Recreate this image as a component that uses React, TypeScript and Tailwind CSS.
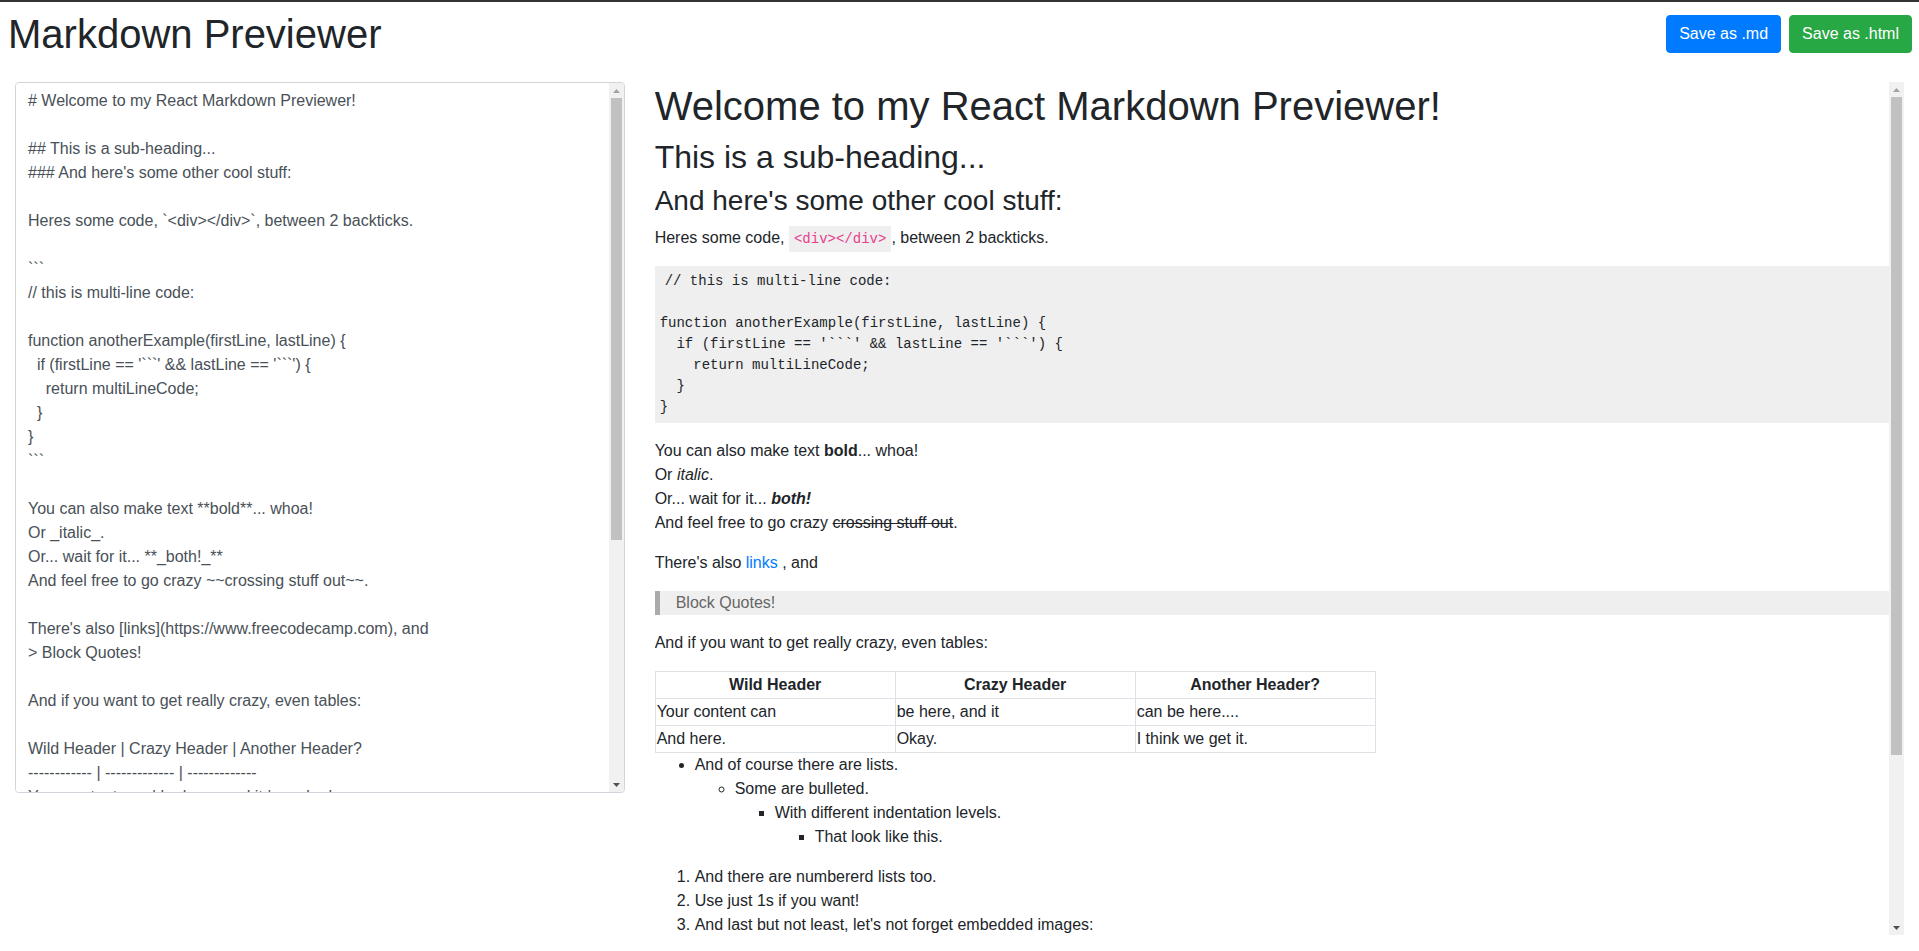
import React from "react";

const SOURCE = `# Welcome to my React Markdown Previewer!

## This is a sub-heading...
### And here's some other cool stuff:

Heres some code, \`<div></div>\`, between 2 backticks.

\`\`\`
// this is multi-line code:

function anotherExample(firstLine, lastLine) {
  if (firstLine == '\`\`\`' && lastLine == '\`\`\`') {
    return multiLineCode;
  }
}
\`\`\`

You can also make text **bold**... whoa!
Or _italic_.
Or... wait for it... **_both!_**
And feel free to go crazy ~~crossing stuff out~~.

There's also [links](https://www.freecodecamp.com), and
> Block Quotes!

And if you want to get really crazy, even tables:

Wild Header | Crazy Header | Another Header?
------------ | ------------- | -------------
Your content can | be here, and it | can be here....
And here. | Okay. | I think we get it.

- And of course there are lists.
  - Some are bulleted.
     - With different indentation levels.
        - That look like this.


1. And there are numbererd lists too.
1. Use just 1s if you want!
1. And last but not least, let's not forget embedded images:

![freeCodeCamp Logo](https://cdn.freecodecamp.org/testable-projects-fcc/images/fcc_secondary.svg)
`;

const CODE = `// this is multi-line code:

function anotherExample(firstLine, lastLine) {
  if (firstLine == '\`\`\`' && lastLine == '\`\`\`') {
    return multiLineCode;
  }
}`;

function Scrollbar({ thumbClass }: { thumbClass: string }) {
  return (
    <div className="flex w-[15px] shrink-0 flex-col bg-[#f1f1f1]">
      <div className="flex h-[15px] shrink-0 items-center justify-center">
        <svg width="7" height="4" viewBox="0 0 7 4">
          <path d="M3.5 0L7 4H0z" fill="#a3a3a3" />
        </svg>
      </div>
      <div className={"mx-[2px] shrink-0 bg-[#c1c1c1] " + thumbClass} />
      <div className="flex-1" />
      <div className="flex h-[15px] shrink-0 items-center justify-center">
        <svg width="7" height="4" viewBox="0 0 7 4">
          <path d="M0 0H7L3.5 4z" fill="#505050" />
        </svg>
      </div>
    </div>
  );
}

export default function App() {
  return (
    <div className="min-h-screen bg-white border-t-2 border-[#333] font-['Liberation_Sans',Arial,sans-serif] text-[#212529] text-base leading-6">
      <header className="flex h-[64px] items-center justify-between pl-[8px] pr-[7px]">
        <h1 className="text-[40px] leading-[48px] font-normal">Markdown Previewer</h1>
        <div className="flex gap-2">
          <button className="h-[38px] rounded-[4px] border border-[#007bff] bg-[#007bff] px-3 text-base leading-6 text-white">
            Save as .md
          </button>
          <button className="h-[38px] rounded-[4px] border border-[#28a745] bg-[#28a745] px-3 text-base leading-6 text-white">
            Save as .html
          </button>
        </div>
      </header>
      <main className="flex pt-4">
        <div className="w-1/3 px-[15px]">
          <div className="flex h-[711px] overflow-hidden rounded-[4px] border border-[#ced4da] bg-white">
            <textarea
              defaultValue={SOURCE}
              spellCheck={false}
              className="block h-full min-w-0 flex-1 resize-none overflow-hidden bg-white px-3 py-[6px] text-base leading-6 text-[#495057] outline-none"
            />
            <Scrollbar thumbClass="h-[442px]" />
          </div>
        </div>
        <div className="w-2/3 px-[15px]">
          <div className="flex h-[853px]">
            <div className="min-w-0 flex-1 overflow-hidden">
              <h1 className="mb-2 text-[40px] leading-[1.2] font-normal">Welcome to my React Markdown Previewer!</h1>
              <h2 className="mb-2 text-[32px] leading-[1.2] font-normal">This is a sub-heading...</h2>
              <h3 className="mb-2 text-[28px] leading-[1.2] font-normal">And here's some other cool stuff:</h3>
              <p className="mb-4">
                Heres some code,{" "}
                <code className="bg-[#efefef] p-[5px] font-['Liberation_Mono',monospace] text-[14px] leading-none text-[#e83e8c]">
                  &lt;div&gt;&lt;/div&gt;
                </code>
                , between 2 backticks.
              </p>
              <pre className="mb-4 bg-[#efefef] p-[5px] font-['Liberation_Mono',monospace] text-[14px] leading-[21px] whitespace-pre">
                <code className="bg-[#efefef] p-[5px]">{CODE}</code>
              </pre>
              <p className="mb-4">
                You can also make text <strong className="font-bold">bold</strong>... whoa!
                <br />
                Or <em className="italic">italic</em>.
                <br />
                Or... wait for it...{" "}
                <strong className="font-bold">
                  <em className="italic">both!</em>
                </strong>
                <br />
                And feel free to go crazy <del className="line-through">crossing stuff out</del>.
              </p>
              <p className="mb-4">
                There's also <a href="#" className="text-[#007bff]">links</a> , and
              </p>
              <blockquote className="mb-4 border-l-[5px] border-[#aaaaaa] bg-[#efefef] pl-4 text-[#666]">
                <p>Block Quotes!</p>
              </blockquote>
              <p className="mb-4">And if you want to get really crazy, even tables:</p>
              <table className="w-[721px] table-fixed border-collapse">
                <thead>
                  <tr>
                    <th className="border border-[#dee2e6] p-px text-center font-bold">Wild Header</th>
                    <th className="border border-[#dee2e6] p-px text-center font-bold">Crazy Header</th>
                    <th className="border border-[#dee2e6] p-px text-center font-bold">Another Header?</th>
                  </tr>
                </thead>
                <tbody>
                  <tr>
                    <td className="border border-[#dee2e6] p-px">Your content can</td>
                    <td className="border border-[#dee2e6] p-px">be here, and it</td>
                    <td className="border border-[#dee2e6] p-px">can be here....</td>
                  </tr>
                  <tr>
                    <td className="border border-[#dee2e6] p-px">And here.</td>
                    <td className="border border-[#dee2e6] p-px">Okay.</td>
                    <td className="border border-[#dee2e6] p-px">I think we get it.</td>
                  </tr>
                </tbody>
              </table>
              <ul className="mb-4 list-disc pl-10">
                <li>
                  And of course there are lists.
                  <ul className="list-[circle] pl-10">
                    <li>
                      Some are bulleted.
                      <ul className="list-[square] pl-10">
                        <li>
                          With different indentation levels.
                          <ul className="list-[square] pl-10">
                            <li>That look like this.</li>
                          </ul>
                        </li>
                      </ul>
                    </li>
                  </ul>
                </li>
              </ul>
              <ol className="mb-4 list-decimal pl-10">
                <li>And there are numbererd lists too.</li>
                <li>Use just 1s if you want!</li>
                <li>And last but not least, let's not forget embedded images:</li>
              </ol>
            </div>
            <Scrollbar thumbClass="h-[658px]" />
          </div>
        </div>
      </main>
    </div>
  );
}
